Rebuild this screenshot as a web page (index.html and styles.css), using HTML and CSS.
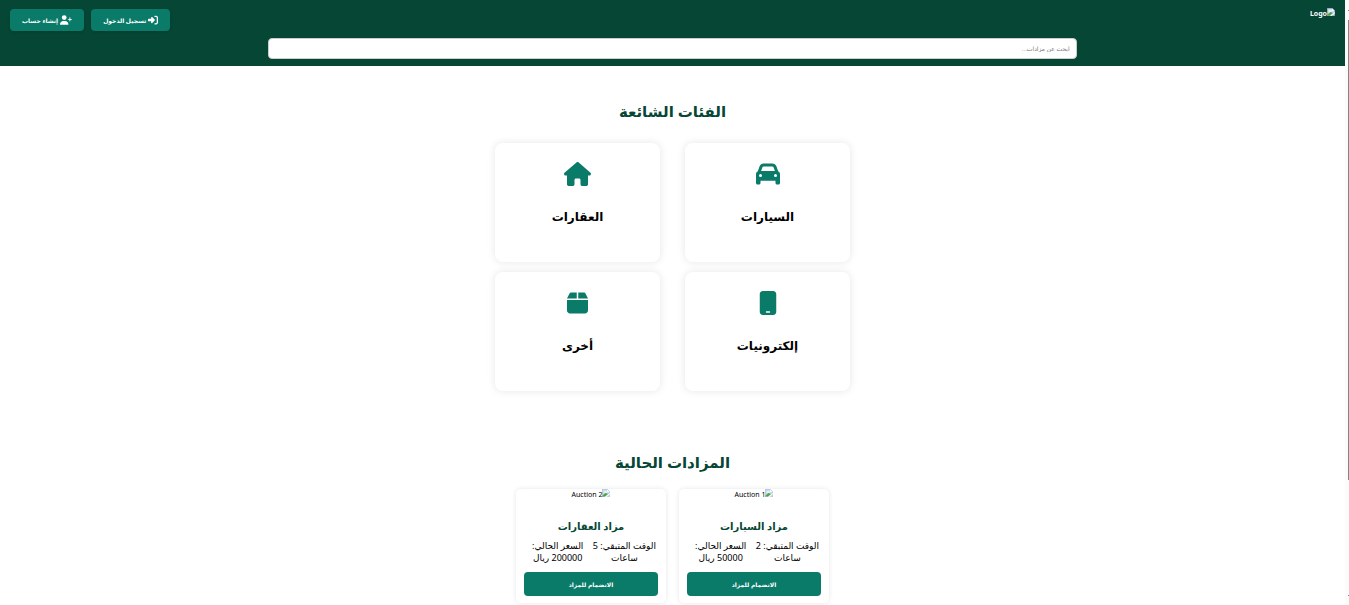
FILE: index.html
```html
<!DOCTYPE html>
<html lang="ar">
<head>
<meta charset="utf-8">
<title>المزادات</title>
<link rel="stylesheet" href="styles.css">
</head>
<body>
<svg class="defs" aria-hidden="true">
  <symbol id="broken" viewBox="0 0 16 16"><path fill="#c5d6f4" stroke="#a3a9b0" d="M.5.5h10l5 5v10H.5z"/><path fill="#fff" d="M10 1v5h5z"/><path fill="#e8effb" d="M3 7a2 2 0 0 1 2-3 2.500 2.500 0 0 1 4 1 1.500 1.500 0 0 1 0 3H4z"/><path fill="#4ea83c" d="M1 15v-2l6-5 5 2-6 5z"/><path fill="#fff" d="M6 16 16 8v2l-7 6z"/></symbol>
</svg>
<div class="page" dir="rtl">
  <header class="header">
    <div class="bar">
      <a class="logo" href="#"><svg class="broken"><use href="#broken"/></svg><span>Logo</span></a>
      <nav class="actions">
        <button class="btn" type="button"><svg viewBox="0 0 512 512"><path d="M217.900 105.900L340.700 228.700c7.200 7.200 11.300 17.100 11.300 27.300s-4.100 20.100-11.300 27.300L217.900 406.100c-6.400 6.400-15 9.900-24 9.900c-18.700 0-33.900-15.200-33.900-33.900V320H32c-17.700 0-32-14.300-32-32V224c0-17.700 14.300-32 32-32H160V129.900c0-18.700 15.200-33.900 33.900-33.900c9 0 17.600 3.600 24 9.900zM352 416h64c17.700 0 32-14.300 32-32V128c0-17.700-14.300-32-32-32H352c-17.700 0-32-14.300-32-32s14.300-32 32-32h64c53 0 96 43 96 96V384c0 53-43 96-96 96H352c-17.700 0-32-14.300-32-32s14.300-32 32-32z"/></svg><span>تسجيل الدخول</span></button>
        <button class="btn" type="button"><svg class="wide" viewBox="0 0 640 512"><path d="M96 128a128 128 0 1 1 256 0A128 128 0 1 1 96 128zM0 482.300C0 383.800 79.800 304 178.300 304h91.400C368.200 304 448 383.800 448 482.300c0 16.400-13.300 29.700-29.700 29.700H29.700C13.300 512 0 498.700 0 482.300zM504 312V248H440c-13.300 0-24-10.700-24-24s10.700-24 24-24h64V136c0-13.300 10.700-24 24-24s24 10.700 24 24v64h64c13.300 0 24 10.700 24 24s-10.700 24-24 24H552v64c0 13.300-10.700 24-24 24s-24-10.700-24-24z"/></svg><span>إنشاء حساب</span></button>
      </nav>
    </div>
    <input class="search" type="search" aria-label="ابحث عن مزادات" placeholder="ابحث عن مزادات...">
  </header>
  <main>
    <section class="section">
      <h2>الفئات الشائعة</h2>
      <div class="categories">
        <a class="category" href="#"><svg viewBox="0 0 512 512"><path d="M135.200 117.400L109.100 192H402.900l-26.100-74.600C372.300 104.600 360.200 96 346.600 96H165.400c-13.600 0-25.700 8.600-30.200 21.400zM39.600 196.800L74.800 96.300C88.300 57.800 124.600 32 165.400 32H346.600c40.800 0 77.100 25.800 90.600 64.300l35.200 100.500c23.200 9.600 39.600 32.500 39.600 59.200V400v48c0 17.700-14.300 32-32 32H448c-17.700 0-32-14.300-32-32V400H96v48c0 17.700-14.300 32-32 32H32c-17.700 0-32-14.300-32-32V400 256c0-26.700 16.400-49.600 39.600-59.200zM128 288a32 32 0 1 0 -64 0 32 32 0 1 0 64 0zm288 32a32 32 0 1 0 0-64 32 32 0 1 0 0 64z"/></svg><h3>السيارات</h3></a>
        <a class="category" href="#"><svg viewBox="0 0 576 512"><path d="M575.800 255.500c0 18-15 32.100-32 32.100h-32l.7 160.200c0 2.700-.2 5.400-.5 8.100V472c0 22.100-17.900 40-40 40H392c-22.100 0-40-17.900-40-40V384c0-17.700-14.300-32-32-32H256c-17.700 0-32 14.300-32 32v88c0 22.100-17.900 40-40 40H104c-22.100 0-40-17.900-40-40V287.600H32c-18 0-32-14-32-32.100c0-9 3-17 10-24L266.400 8c7-7 15-8 22-8s15 2 21 7L564.800 231.500c8 7 12 15 11 24z"/></svg><h3>العقارات</h3></a>
        <a class="category" href="#"><svg viewBox="0 0 384 512"><path fill-rule="evenodd" d="M16 64C16 28.700 44.700 0 80 0H304c35.300 0 64 28.700 64 64V448c0 35.300-28.700 64-64 64H80c-35.300 0-64-28.700-64-64V64zM144 448c0 8.800 7.200 16 16 16h64c8.800 0 16-7.200 16-16s-7.200-16-16-16H160c-8.800 0-16 7.200-16 16z"/></svg><h3>إلكترونيات</h3></a>
        <a class="category" href="#"><svg viewBox="0 0 448 512"><path d="M50.700 58.500L0 160H208V32H93.700C75.500 32 58.900 42.300 50.700 58.500zM240 160H448L397.300 58.500C389.100 42.300 372.500 32 354.300 32H240V160zm208 32H0V416c0 35.300 28.700 64 64 64H384c35.300 0 64-28.700 64-64V192z"/></svg><h3>أخرى</h3></a>
      </div>
    </section>
    <section class="section">
      <h2>المزادات الحالية</h2>
      <div class="auctions">
        <article class="auction">
          <div class="photo"><svg class="broken"><use href="#broken"/></svg><span>Auction 1</span></div>
          <h3>مزاد السيارات</h3>
          <div class="facts"><p>الوقت المتبقي: 2<br>ساعات</p><p>السعر الحالي:<br>50000 ريال</p></div>
          <button class="btn join" type="button">الانضمام للمزاد</button>
        </article>
        <article class="auction">
          <div class="photo"><svg class="broken"><use href="#broken"/></svg><span>Auction 2</span></div>
          <h3>مزاد العقارات</h3>
          <div class="facts"><p>الوقت المتبقي: 5<br>ساعات</p><p>السعر الحالي:<br>200000 ريال</p></div>
          <button class="btn join" type="button">الانضمام للمزاد</button>
        </article>
      </div>
    </section>
  </main>
</div>
<div class="rail" aria-hidden="true"><i class="tick"></i><i class="thumb"></i><i class="tick"></i></div>
</body>
</html>
```
FILE: styles.css
```css
* { box-sizing: border-box; }
body {
  margin: 0;
  min-height: 100vh;
  display: flex;
  background: #fff;
  color: #000;
  font-family: "Noto Sans", "DejaVu Sans", sans-serif;
  font-size: 9px;
}
h2, h3, p { margin: 0; }
a { color: inherit; text-decoration: none; }
.defs { position: absolute; width: 0; height: 0; }
.page { flex: 1; min-width: 0; }

.header {
  display: flex;
  flex-direction: column;
  align-items: center;
  gap: 7px;
  padding: 8px 10px 7px;
  background: #064635;
}
.bar { width: 100%; display: flex; justify-content: space-between; align-items: flex-start; }
.logo { display: flex; align-items: center; color: #fff; font-size: 7px; line-height: 12px; font-weight: 700; }
.broken { width: 8px; height: 8px; align-self: flex-start; }
.actions { display: flex; gap: 7px; padding-top: 1px; }
.btn {
  display: flex;
  align-items: center;
  justify-content: center;
  gap: 2px;
  height: 22px;
  padding: 0 12px;
  border: 0;
  border-radius: 4px;
  background: #0a7b69;
  color: #fff;
  font-family: "Liberation Sans", "DejaVu Sans", sans-serif;
  font-size: 6px;
  font-weight: 700;
  white-space: nowrap;
  box-shadow: 0 1px 3px rgba(0, 0, 0, .15);
}
.btn svg { width: 10px; height: 10px; fill: #fff; }
.btn .wide { width: 12px; }
.search {
  width: 61%;
  height: 21px;
  padding: 0 6px;
  border: 1px solid #ccc;
  border-radius: 4px;
  background: #fff;
  font-family: "Liberation Sans", "DejaVu Sans", sans-serif;
  font-size: 6px;
}
.search::placeholder { color: #757575; }

.section { padding: 33px 20px 0; text-align: center; }
.section + .section { padding-top: 59px; }
h2 { color: #064635; font-size: 15px; line-height: 24px; font-weight: 700; }
.categories {
  display: grid;
  grid-template-columns: 165px 165px;
  justify-content: center;
  gap: 10px 25px;
  margin-top: 20px;
}
.category {
  height: 119px;
  padding-top: 19px;
  display: flex;
  flex-direction: column;
  align-items: center;
  gap: 19px;
  border-radius: 8px;
  background: #fff;
  box-shadow: 0 0 8px rgba(0, 0, 0, .1);
}
.category svg { height: 24px; fill: #0a7b69; }
.category h3 { font-size: 12px; line-height: 24px; }

.auctions { display: flex; justify-content: center; gap: 13px; margin-top: 15px; }
.auction {
  width: 150px;
  padding: 0 8px 7px;
  border-radius: 5px;
  background: #fff;
  box-shadow: 0 0 5px rgba(0, 0, 0, .1);
}
.photo { display: flex; justify-content: center; height: 29px; font-size: 7px; line-height: 11px; }
.auction h3 { color: #064635; font-size: 10px; line-height: 16px; }
.facts {
  display: flex;
  justify-content: space-between;
  margin-top: 6px;
  padding-inline: 2px 8px;
  line-height: 12px;
  white-space: nowrap;
}
.join { width: 100%; height: 24px; margin-top: 8px; box-shadow: none; }

.rail {
  width: 4px;
  display: flex;
  flex-direction: column;
  align-items: flex-end;
  padding: 10px 0 9px;
  background: #fbfbfb;
}
.tick { width: 1px; height: 1px; background: #888; }
.thumb { width: 1px; height: 76vh; margin: 9px 0 auto; background: #858585; }
```
